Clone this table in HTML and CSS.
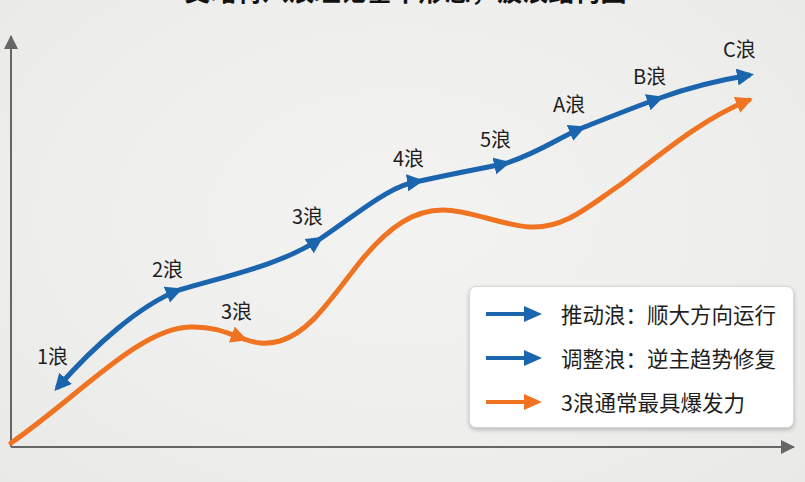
FILE: index.html
```html
<!DOCTYPE html>
<html lang="zh">
<head>
<meta charset="utf-8">
<title>波浪结构图</title>
<link rel="stylesheet" href="styles.css">
</head>
<body>
<div class="page">
  <div class="title-clip"><h1 class="title">艾略特八浪理论基本形态，波浪结构图</h1></div>
  <svg class="chart" viewBox="0 0 805 482" width="805" height="482" xmlns="http://www.w3.org/2000/svg">
    <defs>
      <marker id="ab" markerUnits="userSpaceOnUse" markerWidth="18" markerHeight="18" refX="13" refY="8.5" orient="auto-start-reverse">
        <path d="M0,0 L17,8.5 L0,17 z" fill="#1b64ae"/>
      </marker>
      <marker id="ao" markerUnits="userSpaceOnUse" markerWidth="18" markerHeight="18" refX="13" refY="8.5" orient="auto">
        <path d="M0,0 L17,8.5 L0,17 z" fill="#f07322"/>
      </marker>
      <marker id="ax" markerUnits="userSpaceOnUse" markerWidth="16" markerHeight="14" refX="13" refY="7" orient="auto">
        <path d="M0,0 L14,7 L0,14 z" fill="#666"/>
      </marker>
    </defs>
    <path d="M11,447 L11,36" class="axis" marker-end="url(#ax)"/>
    <path d="M11,447 L794,447" class="axis" marker-end="url(#ax)"/>
    <g class="orange">
      <path d="M11,443 C80,395 140,328 190,327 C215,326 230,334 244,339" marker-end="url(#ao)"/>
      <path d="M244,339 C255,343 265,345 280,341 C310,332 330,300 360,262 C390,225 415,210 443,210 C470,210 500,225 530,227 C565,229 590,205 620,185 C660,155 700,120 749,100" marker-end="url(#ao)"/>
    </g>
    <g class="blue">
      <path d="M57,388 C95,345 140,305 179,290" marker-start="url(#ab)" marker-end="url(#ab)"/>
      <path d="M179,290 C230,275 280,265 320,239"  marker-end="url(#ab)"/>
      <path d="M320,239 C360,212 390,185 420,181" marker-end="url(#ab)"/>
      <path d="M420,181 C460,172 485,168 507,163" marker-end="url(#ab)"/>
      <path d="M507,163 C540,152 560,137 582,128" marker-end="url(#ab)"/>
      <path d="M582,128 C615,115 640,105 660,98" marker-end="url(#ab)"/>
      <path d="M660,98 C690,87 720,80 750,75" marker-end="url(#ab)"/>
    </g>
    <g class="labels">
      <text x="37" y="364">1浪</text>
      <text x="152" y="277">2浪</text>
      <text x="221" y="319">3浪</text>
      <text x="292" y="224">3浪</text>
      <text x="393" y="166">4浪</text>
      <text x="480" y="147">5浪</text>
      <text x="553" y="112">A浪</text>
      <text x="633" y="84">B浪</text>
      <text x="723" y="57">C浪</text>
    </g>
  </svg>
  <div class="legend">
    <div class="legend-row">
      <svg class="legend-arrow" viewBox="0 0 56 20" width="56" height="20"><path d="M0,10 L42,10" stroke="#1b64ae" stroke-width="4"/><path d="M38,2 L56,10 L38,18 z" fill="#1b64ae"/></svg>
      <span class="legend-text">推动浪：顺大方向运行</span>
    </div>
    <div class="legend-row">
      <svg class="legend-arrow" viewBox="0 0 56 20" width="56" height="20"><path d="M0,10 L42,10" stroke="#1b64ae" stroke-width="4"/><path d="M38,2 L56,10 L38,18 z" fill="#1b64ae"/></svg>
      <span class="legend-text">调整浪：逆主趋势修复</span>
    </div>
    <div class="legend-row">
      <svg class="legend-arrow" viewBox="0 0 56 20" width="56" height="20"><path d="M0,10 L42,10" stroke="#f07322" stroke-width="4"/><path d="M38,2 L56,10 L38,18 z" fill="#f07322"/></svg>
      <span class="legend-text">3浪通常最具爆发力</span>
    </div>
  </div>
</div>
</body>
</html>
```
FILE: styles.css
```css
html, body {
  margin: 0;
  padding: 0;
}
body {
  width: 805px;
  height: 482px;
  overflow: hidden;
  background: radial-gradient(ellipse at 50% 45%, #f3f3f2 0%, #eeeeed 60%, #e9e9e8 100%);
  font-family: "Noto Sans CJK SC", "Noto Sans", sans-serif;
  color: #1e1e1e;
}
.page {
  position: relative;
  width: 805px;
  height: 482px;
}
.title-clip {
  height: 7px;
  overflow: hidden;
  display: flex;
  justify-content: center;
}
.title {
  margin: -23px 0 0 0;
  font-size: 26px;
  line-height: 26px;
  font-weight: 700;
  color: #111;
  white-space: nowrap;
  padding-left: 6px;
}
.chart {
  position: absolute;
  left: 0;
  top: 0;
}
.axis {
  stroke: #666;
  stroke-width: 2;
  fill: none;
}
.orange path {
  fill: none;
  stroke: #f07322;
  stroke-width: 5;
  stroke-linecap: round;
}
.blue path {
  fill: none;
  stroke: #1b64ae;
  stroke-width: 5;
  stroke-linecap: butt;
}
.labels text {
  font-family: "Noto Sans CJK SC", "Noto Sans", sans-serif;
  font-size: 20px;
  fill: #1e1e1e;
}
.legend {
  position: absolute;
  left: 469px;
  top: 286px;
  width: 325px;
  height: 142px;
  box-sizing: border-box;
  padding: 5px 0 0 16px;
  background: #fff;
  border: 1px solid #d8d8d8;
  border-radius: 7px;
  box-shadow: 0 2px 4px rgba(0, 0, 0, 0.22);
  display: flex;
  flex-direction: column;
}
.legend-row {
  height: 44px;
  display: flex;
  align-items: center;
  gap: 19px;
}
.legend-arrow {
  flex: none;
}
.legend-text {
  font-size: 21.5px;
  line-height: 1;
  color: #1e1e1e;
}
```
